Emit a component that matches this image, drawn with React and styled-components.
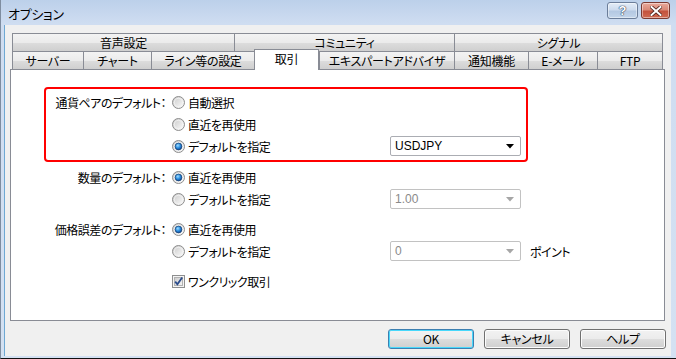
import React from 'react';
import styled, { createGlobalStyle } from 'styled-components';

const GlobalStyle = createGlobalStyle`
  html, body {
    margin: 0;
    padding: 0;
    background: #ffffff;
  }
  body {
    font-family: "Noto Sans CJK JP", "Noto Sans", sans-serif;
    font-size: 12px;
    font-feature-settings: "palt";
    color: #000;
  }
`;

const Window = styled.div`
  width: 676px;
  height: 359px;
  box-sizing: border-box;
  display: flex;
  flex-direction: column;
  background: linear-gradient(to bottom, #bcd0ea 0px, #cfddf1 24px, #d4e1f2 100%);
  border-left: 1px solid #7f8da0;
  border-bottom: 1px solid #111;
  overflow: hidden;
`;

const TitleBar = styled.div`
  height: 25px;
  flex: none;
  display: flex;
  align-items: flex-start;
  padding-left: 7px;
`;

const Title = styled.div`
  align-self: center;
  font-size: 13px;
  letter-spacing: -0.3px;
  color: #000;
  margin-top: 1px;
`;

const CaptionButtons = styled.div`
  margin-left: auto;
  margin-right: 6px;
  margin-top: 2px;
  display: flex;
  gap: 3px;
`;

const CaptionButton = styled.div`
  width: ${(p) => p.$w}px;
  height: 17px;
  box-sizing: border-box;
  border: 1px solid ${(p) => (p.$close ? '#7a3a32' : '#6b7d99')};
  border-radius: 3px;
  background: ${(p) =>
    p.$close
      ? 'linear-gradient(to bottom, #e9a99b 0%, #d98a78 45%, #c4523d 55%, #cf6a52 100%)'
      : 'linear-gradient(to bottom, #e3ecf7 0%, #cddbee 45%, #b4c8e2 55%, #c3d5ea 100%)'};
  box-shadow: inset 0 0 0 1px rgba(255, 255, 255, 0.45);
  display: flex;
  align-items: center;
  justify-content: center;
  font-family: "Liberation Sans", sans-serif;
  font-weight: bold;
  font-size: 13px;
  color: #fff;
  text-shadow: 0 0 1px #2c3e5a, 0 0 1px #2c3e5a, 0 0 1px #2c3e5a;
`;

const Client = styled.div`
  flex: 1;
  margin: 0 5px 2px 3px;
  background: #f0f0f0;
  border-left: 1px solid #6ea8d3;
  display: flex;
  flex-direction: column;
  padding: 8px 6px 7px 5px;
  min-height: 0;
`;

const TabRow = styled.div`
  display: grid;
  grid-template-columns: ${(p) => p.$cols};
  height: 18px;
  margin: 0 2px;
`;

const Tab = styled.div`
  box-sizing: border-box;
  border: 1px solid #898c95;
  border-right: ${(p) => (p.$last || p.$active ? '1px solid #898c95' : 'none')};
  border-bottom: none;
  background: ${(p) =>
    p.$active ? '#ffffff' : 'linear-gradient(to bottom, #f3f3f3 0%, #ebebeb 50%, #dddddd 51%, #cfcfcf 100%)'};
  margin-top: ${(p) => (p.$active ? '-2px' : '0')};
  margin-bottom: ${(p) => (p.$active ? '-1px' : '0')};
  position: relative;
  z-index: ${(p) => (p.$active ? 2 : 1)};
  display: flex;
  align-items: ${(p) => (p.$active ? 'flex-start' : 'center')};
  padding-top: ${(p) => (p.$active ? '1px' : '0')};
  justify-content: center;
  white-space: nowrap;
  font-size: 12px;
  letter-spacing: -0.3px;
  line-height: 16px;
`;

const Panel = styled.div`
  flex: 1;
  background: #fff;
  border: 1px solid #898c95;
  padding: 17px 0 0 33px;
  min-height: 0;
`;

const Group = styled.div`
  width: 484px;
  box-sizing: border-box;
  border: 2px solid ${(p) => (p.$highlight ? '#ff0000' : 'transparent')};
  border-radius: 4px;
  padding: ${(p) => (p.$highlight ? '2px 0 3px' : '0')};
  margin-top: ${(p) => p.$top || 0}px;
`;

const Row = styled.div`
  display: grid;
  grid-template-columns: 122px 222px 131px auto;
  align-items: center;
  height: 22px;
  letter-spacing: -0.5px;
`;

const Label = styled.div`
  text-align: right;
  white-space: nowrap;
  padding-right: 2px;
`;

const Option = styled.label`
  display: flex;
  align-items: center;
  gap: 3px;
  padding-left: 4px;
  white-space: nowrap;
`;

const Combo = styled.div`
  height: 20px;
  box-sizing: border-box;
  border: 1px solid ${(p) => (p.$disabled ? '#c2c2c2' : '#abadb3')};
  border-radius: 2px;
  background: #fff;
  display: flex;
  align-items: center;
  padding: 0 6px 0 4px;
  color: ${(p) => (p.$disabled ? '#8a8a8a' : '#000')};
  font-family: "Liberation Sans", sans-serif;
  font-size: 12px;
  letter-spacing: 0;
`;

const ComboValue = styled.span`
  flex: 1;
`;

const Unit = styled.div`
  padding-left: 9px;
  white-space: nowrap;
`;

const Footer = styled.div`
  display: flex;
  justify-content: flex-end;
  gap: 10px;
  margin-top: 8px;
  margin-right: -1px;
`;

const Button = styled.button`
  width: 86px;
  height: 20px;
  box-sizing: border-box;
  border: 1px solid ${(p) => (p.$default ? '#3c7fb1' : '#707070')};
  border-radius: 3px;
  background: linear-gradient(to bottom, #f2f2f2 0%, #ebebeb 50%, #dddddd 51%, #cfcfcf 100%);
  box-shadow: inset 0 0 0 1px ${(p) => (p.$default ? '#48d8fb' : '#fcfcfc')};
  font-family: "Noto Sans CJK JP", "Liberation Sans", sans-serif;
  font-feature-settings: "palt";
  font-size: 12px;
  letter-spacing: -0.3px;
  color: #000;
  padding: 0;
  line-height: 16px;
`;

const Radio = ({ checked }) => (
  <svg width="13" height="13" viewBox="0 0 13 13">
    <defs>
      <linearGradient id="rbg" x1="0" y1="0" x2="1" y2="1">
        <stop offset="0" stopColor="#c8c8c8" />
        <stop offset="1" stopColor="#ffffff" />
      </linearGradient>
      <radialGradient id="rdot" cx="0.4" cy="0.35" r="0.7">
        <stop offset="0" stopColor="#9fdcff" />
        <stop offset="0.5" stopColor="#2c8fe0" />
        <stop offset="1" stopColor="#0b3f8c" />
      </radialGradient>
    </defs>
    <circle cx="6.5" cy="6.5" r="6" fill="url(#rbg)" stroke="#8d8d8d" />
    <circle cx="6.5" cy="6.5" r="4.2" fill="none" stroke="#f4f4f4" strokeWidth="0.8" />
    {checked && <circle cx="6.5" cy="6.5" r="3.4" fill="url(#rdot)" stroke="#173f73" strokeWidth="0.7" />}
  </svg>
);

const Checkbox = () => (
  <svg width="13" height="13" viewBox="0 0 13 13">
    <defs>
      <linearGradient id="cbg" x1="0" y1="0" x2="1" y2="1">
        <stop offset="0" stopColor="#cbcbcb" />
        <stop offset="1" stopColor="#f7f7f7" />
      </linearGradient>
    </defs>
    <rect x="0.5" y="0.5" width="12" height="12" fill="#f4f4f4" stroke="#8e8f8f" />
    <rect x="2.5" y="2.5" width="8" height="8" fill="url(#cbg)" stroke="#b2b2b2" />
    <path d="M3.2 6.6 L5.4 9.3 L10.2 2.6" fill="none" stroke="#2b4c8c" strokeWidth="1.8" />
  </svg>
);

const Arrow = ({ disabled }) => (
  <svg width="8" height="5" viewBox="0 0 8 5">
    <path d="M0 0 H8 L4 4.5 Z" fill={disabled ? '#a6a6a6' : '#000'} />
  </svg>
);

const CloseGlyph = () => (
  <svg width="12" height="10" viewBox="0 0 12 10">
    <path
      d="M1.5 1 L10.5 9 M10.5 1 L1.5 9"
      stroke="#4a1e18"
      strokeWidth="3.6"
      strokeLinecap="square"
    />
    <path d="M1.5 1 L10.5 9 M10.5 1 L1.5 9" stroke="#fff" strokeWidth="2" strokeLinecap="square" />
  </svg>
);

const topTabs = ['音声設定', 'コミュニティ', 'シグナル'];
const bottomTabs = ['サーバー', 'チャート', 'ライン等の設定', '取引', 'エキスパートアドバイザ', '通知機能', 'E-メール', 'FTP'];

const ComboBox = ({ value, disabled }) => (
  <Combo $disabled={disabled}>
    <ComboValue>{value}</ComboValue>
    <Arrow disabled={disabled} />
  </Combo>
);

const App = () => (
  <>
    <GlobalStyle />
    <Window>
      <TitleBar>
        <Title>オプション</Title>
        <CaptionButtons>
          <CaptionButton $w={31}>?</CaptionButton>
          <CaptionButton $w={29} $close>
            <CloseGlyph />
          </CaptionButton>
        </CaptionButtons>
      </TitleBar>
      <Client>
        <TabRow $cols="222px 220px 209px">
          {topTabs.map((t, i) => (
            <Tab key={t} $last={i === topTabs.length - 1}>
              {t}
            </Tab>
          ))}
        </TabRow>
        <TabRow $cols="71px 68px 103px 65px 135px 74px 69px 66px">
          {bottomTabs.map((t, i) => (
            <Tab key={t} $active={t === '取引'} $last={i === bottomTabs.length - 1}>
              {t}
            </Tab>
          ))}
        </TabRow>
        <Panel>
          <Group $highlight>
            <Row>
              <Label>通貨ペアのデフォルト：</Label>
              <Option>
                <Radio />
                自動選択
              </Option>
            </Row>
            <Row>
              <div />
              <Option>
                <Radio />
                直近を再使用
              </Option>
            </Row>
            <Row>
              <div />
              <Option>
                <Radio checked />
                デフォルトを指定
              </Option>
              <ComboBox value="USDJPY" />
            </Row>
          </Group>
          <Group $top={2}>
            <Row>
              <Label>数量のデフォルト：</Label>
              <Option>
                <Radio checked />
                直近を再使用
              </Option>
            </Row>
            <Row>
              <div />
              <Option>
                <Radio />
                デフォルトを指定
              </Option>
              <ComboBox value="1.00" disabled />
            </Row>
          </Group>
          <Group $top={4}>
            <Row>
              <Label>価格誤差のデフォルト：</Label>
              <Option>
                <Radio checked />
                直近を再使用
              </Option>
            </Row>
            <Row>
              <div />
              <Option>
                <Radio />
                デフォルトを指定
              </Option>
              <ComboBox value="0" disabled />
              <Unit>ポイント</Unit>
            </Row>
          </Group>
          <Group $top={4}>
            <Row>
              <div />
              <Option>
                <Checkbox />
                ワンクリック取引
              </Option>
            </Row>
          </Group>
        </Panel>
        <Footer>
          <Button $default>OK</Button>
          <Button>キャンセル</Button>
          <Button>ヘルプ</Button>
        </Footer>
      </Client>
    </Window>
  </>
);

export default App;
